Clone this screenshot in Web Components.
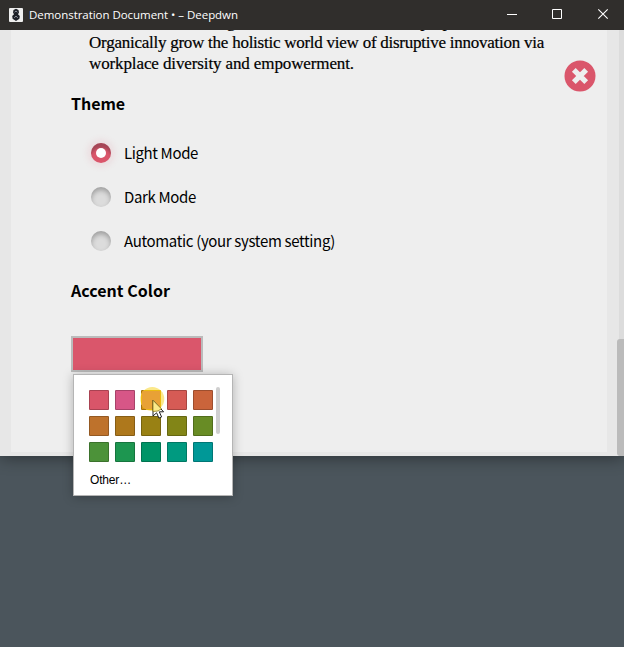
<!DOCTYPE html>
<html lang="en"><head><meta charset="utf-8"><title>Demonstration Document</title>
<style>html,body{margin:0;height:100%;overflow:hidden;background:#4b555c}</style></head>
<body>
<app-window>
<title-bar slot="title"><fit-text w="209">Demonstration Document • – Deepdwn</fit-text></title-bar>
<settings-page slot="page"></settings-page>
</app-window>
<script>
const define = (name, html, setup) => customElements.define(name, class extends HTMLElement {
  constructor() {
    super();
    const t = document.createElement('template');
    t.innerHTML = html;
    this.attachShadow({mode: 'open'}).append(t.content.cloneNode(true));
  }
  connectedCallback() { if (setup) setup(this); }
});

define('title-bar', `<style>
:host{display:flex;align-items:center;height:30px;box-sizing:border-box;background:#302e2c;color:#fff;font:11.5px/30px "Open Sans",sans-serif;padding-left:9px}
.t{margin-left:6px;flex:1}
.c{width:46px;height:30px;display:block}
svg{display:block}
</style>
<svg width="14" height="14" viewBox="0 0 14 14"><rect width="14" height="14" rx="1" fill="#eee"/><path d="M7 .8 9.5 2 10 4.5 9 6.3 10.8 8 10.4 10.8 7 13 3.6 10.8 3.2 8 5 6.3 4 4.5 4.5 2Z" fill="#1c1f26"/><path d="M5.6 4.2 7 3l1.4 1.2M5.2 9.7 7 8.2l1.8 1.5" stroke="#8d919c" fill="none"/></svg>
<div class="t"><slot></slot></div>
<svg class="c" viewBox="0 0 46 30"><path d="M21 14.5h10" stroke="#fff"/></svg>
<svg class="c" viewBox="0 0 46 30"><path d="M20.5 9.5h9v9h-9z" stroke="#fff" fill="none"/></svg>
<svg class="c" viewBox="0 0 46 30"><path d="M20.3 9.3l9.4 9.4M29.7 9.3l-9.4 9.4" stroke="#fff" stroke-width="1.1"/></svg>
`);

define('app-window', `<style>
:host{display:flex;flex-direction:column;width:624px;height:456px;position:relative;box-shadow:0 1px 16px rgba(0,0,0,.45)}
.body{flex:1;display:flex;min-height:0;background:#e7e7e7;padding-left:11px}
.page{flex:none;width:596px;height:422px;background:#eee}
.gap{width:10px}
.track{width:7px;background:linear-gradient(90deg,#e7e7e7 2px,#dcdcdc 2px);padding-top:309px;box-sizing:border-box}
.thumb{height:117px;background:#bbb;border-radius:3px 0 0 3px}
</style><slot name="title"></slot><div class="body"><div class="page"><slot name="page"></slot></div><div class="gap"></div><div class="track"><div class="thumb"></div></div></div>`);

define('close-button', `<style>:host{display:block;width:32px;height:32px}svg{display:block}</style>
<svg width="32" height="32" viewBox="0 0 32 32"><circle cx="16" cy="16" r="15.5" fill="#da566b"/><path d="M9.8 9.8l12.4 12.4M22.2 9.8L9.8 22.2" stroke="#eee" stroke-width="5.3"/></svg>`);

define('radio-option', `<style>
:host{display:flex;align-items:center;height:44px;font:15px/44px "Noto Sans CJK SC",sans-serif}
i{width:20px;height:20px;border-radius:50%;margin-right:13px;background:#dcdcdc;box-shadow:inset 0 3px 5px rgba(0,0,0,.28);display:grid;place-items:center}
:host([checked]) i{background:#da566b;box-shadow:inset 0 6px 3px -1px rgba(90,50,60,.42),0 0 7px 3px rgba(218,86,107,.12)}
:host([checked]) i::after{content:"";width:10px;height:10px;border-radius:50%;background:#fff}
</style><i></i><slot></slot>`);

define('color-swatch', `<style>:host{display:block;box-sizing:border-box;width:20px;height:20px;border:1px solid rgba(0,0,0,.22);border-radius:1px}</style>`, el => { el.style.backgroundColor = el.getAttribute('color'); });

define('color-popup', `<style>
:host{display:block;box-sizing:border-box;width:160px;height:122px;background:#fff;border:1px solid #b5b5b5;padding:15px 0 0 15px;box-shadow:0 1px 10px rgba(0,0,0,.26)}
.row{display:flex}
.grid{display:grid;grid-template-columns:repeat(5,20px);gap:6px}
.bar{width:4px;height:47px;margin:-3px 0 0 3px;border-radius:2px;background:#cfcfcf}
.other{font:12px/16px "Liberation Sans",sans-serif;color:#000;margin:10px 0 0 1px}
.pointer{position:absolute;left:66px;top:12px}
</style><div class="row"><div class="grid"></div><div class="bar"></div></div><div class="other"><fit-text w="41">Other…</fit-text></div>
<svg class="pointer" width="26" height="34" viewBox="0 0 26 34"><defs><clipPath id="r"><circle cx="12.3" cy="12" r="12"/></clipPath></defs><g clip-path="url(#r)"><path d="M0 0h26v26H0z" fill="#fbe88a"/><path d="M1 3h20v20H1z" fill="#ecba10"/><path d="M2 4h18v18H2z" fill="#e8a136"/></g><path d="M13 13.3V29l3.6-3.2 2.3 5.3 2.7-1.1-2.3-5.2h4.3z" fill="#fff" stroke="#222"/><path d="M13 13.3v11.2l5-.5 3.4-2.2z" fill="#fbe98a" stroke="#8a7a1c" stroke-width=".8"/></svg>`, el => {
  const colors = ['#d95569','#d75687','#d99310','#d65b55','#ca643b','#be722c','#ae781c','#998114','#828517','#688c25','#4c9239','#1d9650','#009467','#009a80','#009897'];
  el.shadowRoot.querySelector('.grid').innerHTML = colors.map(c => `<color-swatch color="${c}"></color-swatch>`).join('');
});

define('settings-page', `<style>
:host{display:block;height:422px;position:relative;color:#000}
.clip{height:50px;overflow:hidden;padding-left:78px}
.copy{margin-top:-19px;font:17px/21px "Liberation Serif",serif;-webkit-text-stroke:.2px #000}
.copy div{height:21px}
h2{font:bold 16px/24px "Noto Sans CJK SC",sans-serif;margin:0 0 0 60px;height:24px}
.theme{margin-top:11px}
.list{padding:16px 0 0 80px}
.accent{margin-top:15px}
.well{width:132px;height:36px;box-sizing:border-box;margin:34px 0 0 60px;border:2px solid #bbb;background:#da566b}
close-button{position:absolute;left:553px;top:30px}
color-popup{position:absolute;left:62px;top:344px}
</style>
<div class="clip"><div class="copy"><div><fit-text w="411">collaborative thinking to further the overall value proposition.</fit-text></div><div><fit-text w="455">Organically grow the holistic world view of disruptive innovation via</fit-text></div><div><fit-text w="265">workplace diversity and empowerment.</fit-text></div></div></div>
<h2 class="theme"><fit-text w="54">Theme</fit-text></h2>
<div class="list">
<radio-option checked><fit-text w="74">Light Mode</fit-text></radio-option>
<radio-option><fit-text w="72">Dark Mode</fit-text></radio-option>
<radio-option><fit-text w="211">Automatic (your system setting)</fit-text></radio-option>
</div>
<h2 class="accent"><fit-text w="99">Accent Color</fit-text></h2>
<div class="well"></div>
<close-button></close-button>
<color-popup></color-popup>`);

// A single line of text tracked to occupy the width given in "w".
define('fit-text', `<style>:host{display:inline-block;white-space:nowrap}span{display:inline-block}</style><span><slot></slot></span>`, el => {
  const span = el.shadowRoot.querySelector('span');
  const w = parseFloat(el.getAttribute('w'));
  const now = span.getBoundingClientRect().width;
  if (w && now) span.style.letterSpacing = ((w - now) / el.textContent.length) + 'px';
});
</script>
</body></html>
